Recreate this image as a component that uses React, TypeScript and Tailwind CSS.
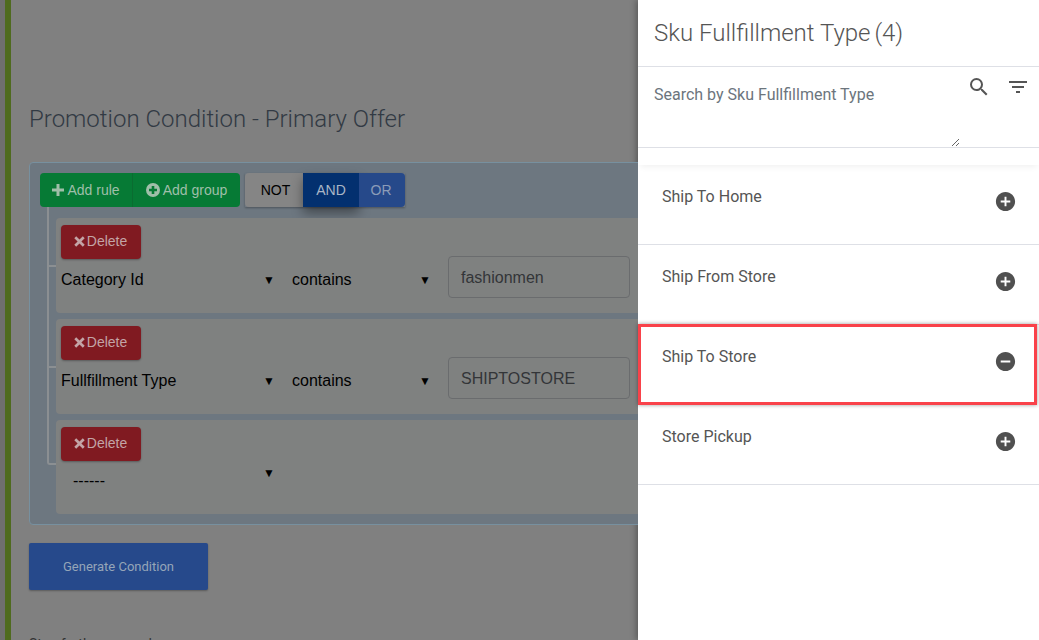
import { MdAddCircle, MdFilterList, MdRemoveCircle, MdSearch } from "react-icons/md";

function PlusIcon() {
  return (
    <svg width="12" height="12" viewBox="0 0 12 12" className="mr-[3px]">
      <path d="M4.5 0h3v4.5H12v3H7.5V12h-3V7.5H0v-3h4.5z" fill="currentColor" />
    </svg>
  );
}

function PlusCircleIcon() {
  return (
    <svg width="14" height="14" viewBox="0 0 14 14" className="mr-[3px]">
      <circle cx="7" cy="7" r="7" fill="currentColor" />
      <path d="M5.7 3h2.6v2.7H11v2.6H8.3V11H5.7V8.3H3V5.7h2.7z" fill="#067a35" />
    </svg>
  );
}

function CrossIcon() {
  return (
    <svg width="11" height="11" viewBox="0 0 11 11" className="mr-[2px]">
      <path d="M2.2 0.3 5.5 3.6 8.8 0.3 10.7 2.2 7.4 5.5 10.7 8.8 8.8 10.7 5.5 7.4 2.2 10.7 0.3 8.8 3.6 5.5 0.3 2.2z" fill="currentColor" />
    </svg>
  );
}

function DeleteButton() {
  return (
    <button className="flex h-[34px] w-[80px] items-center justify-center rounded-[4px] bg-[#801a21] pb-[2px] pr-[1px] text-[14px] text-[#c3a4a6] shadow-[0_1px_2px_rgba(0,0,0,0.3)]">
      <CrossIcon />
      Delete
    </button>
  );
}

function Caret() {
  return <span className="w-[10px] text-center text-[12px] leading-none text-black">▼</span>;
}

function Rule({ field, value }: { field: string; value: string }) {
  return (
    <div className="h-[95px] rounded-[4px] bg-[#7f8180] pl-[5px] pt-[7px]">
      <DeleteButton />
      <div className="flex items-start">
        <div className="flex w-[231px] items-center justify-between pr-[19px] pt-[11px] text-black">
          <span className="text-[16px] leading-[20px]">{field}</span>
          <Caret />
        </div>
        <div className="flex w-[156px] items-center justify-between pr-[19px] pt-[11px] text-black">
          <span className="text-[16px] leading-[20px]">contains</span>
          <Caret />
        </div>
        <div className="-mt-[3px] flex h-[42px] w-[182px] items-center rounded-[4px] border border-[#6a6c6e] px-[12px] pt-px text-[16px] text-[#333538]">
          {value}
        </div>
      </div>
    </div>
  );
}

function FulfillmentItem({ label, selected }: { label: string; selected?: boolean }) {
  return (
    <div
      className={
        selected
          ? "-mt-px relative flex h-[81px] w-[399px] justify-between border-[3px] border-[#f9424a] pl-[21px] pr-[17px] pt-[20px] shadow-[0_0_4px_rgba(0,0,0,0.4)]"
          : "flex h-[80px] justify-between border-b border-[#dee0e6] pl-[24px] pr-[22px] pt-[22px]"
      }
    >
      <span className="text-[16px] leading-[20px] text-[#555555]">{label}</span>
      {selected ? (
        <MdRemoveCircle size={23} className="mt-[3px] text-[#505050]" />
      ) : (
        <MdAddCircle size={23} className="mt-[3px] text-[#505050]" />
      )}
    </div>
  );
}

export default function App() {
  return (
    <div className="flex h-[640px] w-[1039px] overflow-hidden bg-[#808080] font-['Liberation_Sans',sans-serif]">
      {/* Side strip */}
      <div className="w-[5px] shrink-0 bg-[#6f6f6f]" />
      <div className="w-[6px] shrink-0 bg-[#4f6b1f]" />

      {/* Page behind the drawer */}
      <main className="w-[627px] shrink-0 overflow-hidden pl-[18px] pt-[102px]">
        <h1 className="font-['Roboto',sans-serif] text-[24px] font-light leading-[34px] text-[#323a44]">
          Promotion Condition - Primary Offer
        </h1>

        <div className="relative mt-[26px] h-[363px] w-[640px] rounded-[4px] border border-[#77909f] bg-[#6d7780] pl-[26px] pt-[10px]">
          <div className="absolute left-[17px] top-[44px] h-[258px] w-[9px] rounded-bl-[3px] border-b-2 border-l-2 border-[#8b8f92]" />
          <div className="absolute left-[17px] top-[102px] h-[2px] w-[9px] bg-[#8b8f92]" />
          <div className="absolute left-[17px] top-[203px] h-[2px] w-[9px] bg-[#8b8f92]" />

          <div className="-ml-[16px] flex">
            <div className="flex h-[34px] items-center rounded-[4px] bg-[#067a35] text-[14px] text-[#9fbfa9]">
              <div className="flex h-full w-[93px] items-center justify-center border-r border-[#0a6c31]">
                <PlusIcon />
                Add rule
              </div>
              <div className="flex h-full w-[107px] items-center justify-center">
                <PlusCircleIcon />
                Add group
              </div>
            </div>
            <div className="ml-[5px] flex h-[34px] text-[14px] shadow-[0_1px_2px_rgba(0,0,0,0.3)]">
              <div className="flex w-[58px] items-center justify-center rounded-l-[4px] bg-[#858585] pl-[3px] text-black">NOT</div>
              <div className="flex w-[56px] items-center justify-center bg-[#03306f] text-[#a9b6c6] shadow-[0_6px_12px_rgba(0,0,0,0.4)]">AND</div>
              <div className="flex w-[46px] items-center justify-center rounded-r-[4px] bg-[#26498a] pr-[2px] text-[#8b9cb8]">OR</div>
            </div>
          </div>

          <div className="mt-[11px] flex flex-col gap-[6px]">
            <Rule field="Category Id" value="fashionmen" />
            <Rule field="Fullfillment Type" value="SHIPTOSTORE" />
            <div className="h-[94px] rounded-[4px] bg-[#7f8180] pl-[5px] pt-[7px]">
              <DeleteButton />
              <div className="flex w-[231px] items-start justify-between pr-[17px] pl-[12px] text-black">
                <span className="mt-[10px] text-[16px] leading-[20px]">------</span>
                <span className="-mt-[1px]">
                  <Caret />
                </span>
              </div>
            </div>
          </div>
        </div>

        <button className="mt-[18px] flex h-[47px] w-[179px] items-center justify-center rounded-[2px] bg-[#26498b] font-['Roboto',sans-serif] text-[13px] text-[#95a5b8] shadow-[0_1px_2px_rgba(0,0,0,0.3)]">
          Generate Condition
        </button>

        <p className="mt-[44px] font-['Roboto',sans-serif] text-[14px] text-[#333]">Step further second</p>
      </main>

      {/* Drawer */}
      <aside className="w-[401px] shrink-0 bg-white font-['Roboto',sans-serif] shadow-[-2px_0_6px_rgba(0,0,0,0.3)]">
        <div className="flex h-[67px] items-center border-b border-[#dee0e6] pb-[1px] pl-[16px] text-[24px] font-light text-[#555555]">
          <span>
            Sku Fullfillment Type <span className="-ml-[2px]">(4)</span>
          </span>
        </div>
        <div className="relative h-[81px] border-b border-[#dee0e6]">
          <textarea
            placeholder="Search by Sku Fullfillment Type"
            className="block h-[80px] w-[322px] resize-y pl-[16px] pt-[18px] text-[16px] leading-[20px] outline-none placeholder:text-[#6c757d]"
          />
          <MdSearch size={24} className="absolute left-[329px] top-[8px] text-[#555555]" />
          <MdFilterList size={24} className="absolute left-[368px] top-[8px] text-[#555555]" />
        </div>
        <div className="h-[17px] shadow-[0_4px_6px_-2px_rgba(0,0,0,0.06)]" />
        <FulfillmentItem label="Ship To Home" />
        <FulfillmentItem label="Ship From Store" />
        <FulfillmentItem label="Ship To Store" selected />
        <FulfillmentItem label="Store Pickup" />
      </aside>
    </div>
  );
}
